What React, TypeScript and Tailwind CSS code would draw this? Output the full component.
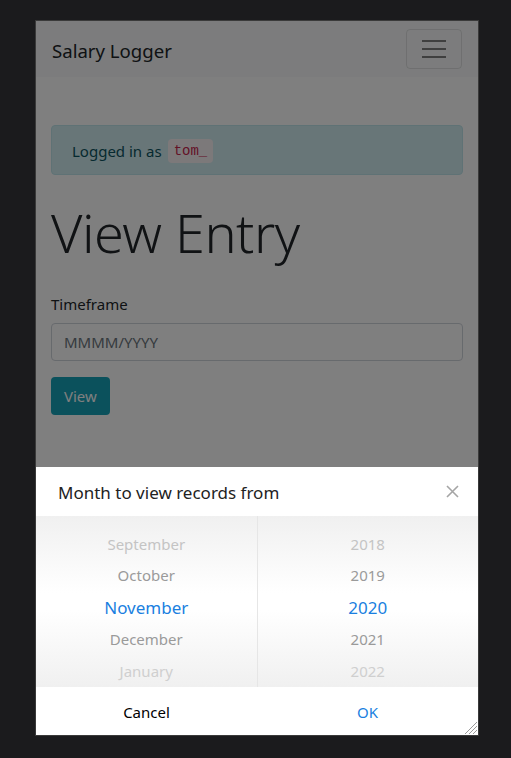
import * as React from 'react';

const months = [
  { label: 'September', tone: 'text-[#c4c4c4]' },
  { label: 'October', tone: 'text-[#9a9a9a]' },
  { label: 'November', tone: 'text-[#1a7fe0] text-[17px]' },
  { label: 'December', tone: 'text-[#9a9a9a]' },
  { label: 'January', tone: 'text-[#cfcfcf]' },
];

const years = [
  { label: '2018', tone: 'text-[#c4c4c4]' },
  { label: '2019', tone: 'text-[#9a9a9a]' },
  { label: '2020', tone: 'text-[#1a7fe0] text-[17px]' },
  { label: '2021', tone: 'text-[#9a9a9a]' },
  { label: '2022', tone: 'text-[#cfcfcf]' },
];

const WheelColumn = ({ items }: { items: { label: string; tone: string }[] }) => (
  <div className="flex-1 flex flex-col pt-[12px]">
    {items.map((item) => (
      <div key={item.label} className={`h-8 flex items-center justify-center text-[15px] ${item.tone}`}>
        {item.label}
      </div>
    ))}
  </div>
);

export default function App() {
  const [timeframe, setTimeframe] = React.useState('');

  return (
    <div className="w-[511px] h-[758px] bg-[#1b1b1d] pt-[20px] pl-[35px] font-['Noto_Sans',sans-serif]">
      <div className="relative w-[444px] h-[716px] border border-[#3a3a3a] bg-white flex flex-col overflow-hidden">
        {/* Page behind the modal */}
        <div className="relative flex-1 overflow-hidden">
          <nav className="h-14 bg-[#f8f9fa] flex items-center justify-between px-4">
            <span className="text-[18.6px] text-[#212529] pt-[3px]">Salary Logger</span>
            <button className="w-14 h-10 rounded border border-black/10 flex flex-col items-center justify-center gap-[6px]">
              <span className="block w-6 h-[2px] bg-[#7f7f7f]" />
              <span className="block w-6 h-[2px] bg-[#7f7f7f]" />
              <span className="block w-6 h-[2px] bg-[#7f7f7f]" />
            </button>
          </nav>

          <div className="px-[15px] pt-12">
            <div className="h-[50px] rounded border border-[#bee5eb] bg-[#d1ecf1] text-[#0c5460] px-5 pt-[2px] flex items-center text-[15px]">
              Logged in as
              <code className="ml-[6px] px-[6px] py-[2px] rounded bg-[#f9f2f4] text-[#c7254e] text-sm font-['Liberation_Mono',monospace]">
                tom_
              </code>
            </div>

            <h1 className="mt-[25px] text-[54px] leading-[1.2] font-light text-[#212529] tracking-[-0.5px]">View Entry</h1>

            <label className="block mt-[28px] text-[15px] text-[#212529]">Timeframe</label>
            <input
              value={timeframe}
              onChange={(e) => setTimeframe(e.target.value)}
              placeholder="MMMM/YYYY"
              className="mt-[8px] w-full h-[38px] rounded border border-[#ced4da] px-3 text-[15px] text-[#495057] placeholder:text-[#6c757d] outline-none"
            />
            <button className="mt-4 h-[38px] px-[13px] rounded bg-[#17a2b8] text-white text-[15px]">View</button>
          </div>

          <div className="absolute inset-0 bg-black/50" />
        </div>

        {/* Month picker sheet */}
        <div className="h-[268px] flex flex-col bg-white">
          <div className="h-[49px] flex items-center justify-between pl-[22px] pr-[18px]">
            <span className="text-[17px] text-[#222] pt-[2px]">Month to view records from</span>
            <svg width="13" height="13" viewBox="0 0 13 13" className="mr-[1px]">
              <path d="M1 1L12 12M12 1L1 12" stroke="#a5a5a5" strokeWidth="1.6" />
            </svg>
          </div>
          <div className="h-[171px] flex overflow-hidden bg-[linear-gradient(to_bottom,#f0f0f0,#ffffff_45%,#ffffff_55%,#f0f0f0)]">
            <WheelColumn items={months} />
            <div className="w-px bg-[#e6e6e6]" />
            <WheelColumn items={years} />
          </div>
          <div className="flex-1 flex pt-[2px]">
            <button className="flex-1 text-[15px] text-black">Cancel</button>
            <button className="flex-1 text-[15px] text-[#1a7fe0]">OK</button>
          </div>
        </div>

        <svg width="14" height="14" viewBox="0 0 14 14" className="absolute right-0 bottom-0">
          <path d="M13 1L1 13M13 5L5 13M13 9L9 13" stroke="#9a9a9a" strokeWidth="1" />
        </svg>
      </div>
    </div>
  );
}
